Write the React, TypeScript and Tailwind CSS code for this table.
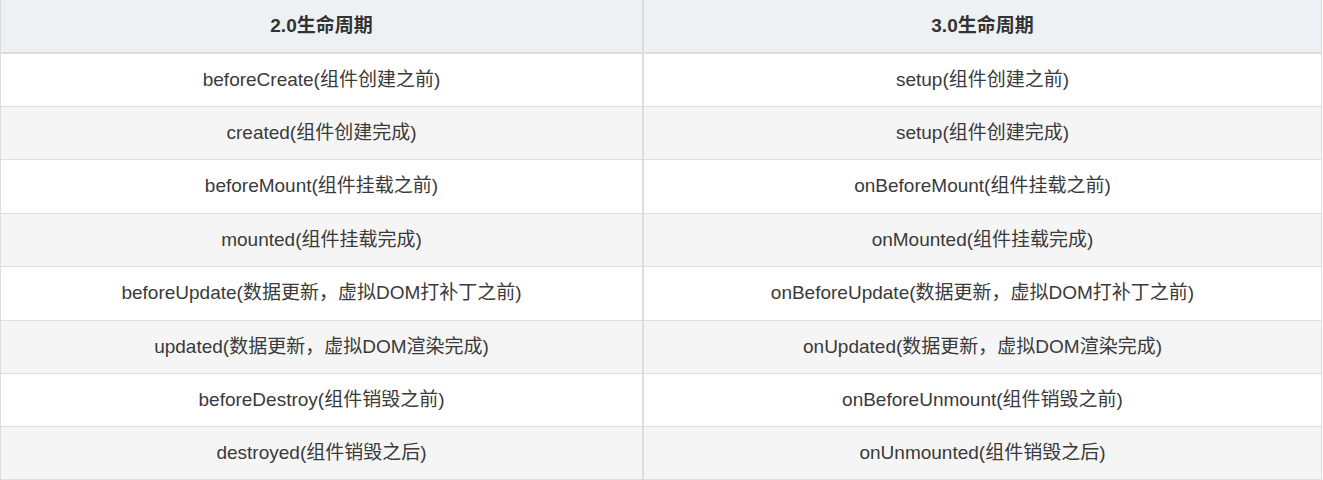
import React from "react";

type Row = {
  v2: string;
  v3: string;
  h: string;
};

// lifecycle rows, heights tuned so the borders land on the reference
const rows: Row[] = [
  { v2: "beforeCreate(组件创建之前)", v3: "setup(组件创建之前)", h: "h-[53px]" },
  { v2: "created(组件创建完成)", v3: "setup(组件创建完成)", h: "h-[53px]" },
  { v2: "beforeMount(组件挂载之前)", v3: "onBeforeMount(组件挂载之前)", h: "h-[54px]" },
  { v2: "mounted(组件挂载完成)", v3: "onMounted(组件挂载完成)", h: "h-[53px]" },
  { v2: "beforeUpdate(数据更新，虚拟DOM打补丁之前)", v3: "onBeforeUpdate(数据更新，虚拟DOM打补丁之前)", h: "h-[54px]" },
  { v2: "updated(数据更新，虚拟DOM渲染完成)", v3: "onUpdated(数据更新，虚拟DOM渲染完成)", h: "h-[53px]" },
  { v2: "beforeDestroy(组件销毁之前)", v3: "onBeforeUnmount(组件销毁之前)", h: "h-[53px]" },
  { v2: "destroyed(组件销毁之后)", v3: "onUnmounted(组件销毁之后)", h: "h-[53px]" },
];

const font = {
  fontFamily: '"Liberation Sans", "Noto Sans CJK SC", sans-serif',
};

export default function App() {
  return (
    <div className="w-[1323px] h-[480px] bg-white overflow-hidden" style={font}>
      <div className="w-[1322px] border-l border-r border-[#dddddd] text-[19px] text-[#3a3a3a]">
        <div className="flex h-[54px] bg-[#eef1f4] border-b-2 border-[#dddddd] font-bold text-[#333333]">
          <div className="w-[643px] flex items-center justify-center border-r-2 border-[#dddddd]">
            2.0生命周期
          </div>
          <div className="flex-1 flex items-center justify-center">3.0生命周期</div>
        </div>
        {rows.map((r, i) => (
          <div
            key={r.v2}
            className={`flex ${r.h} border-b border-[#dddddd] ${i % 2 === 1 ? "bg-[#f5f5f5]" : "bg-white"}`}
          >
            <div className="w-[643px] flex items-center justify-center border-r-2 border-[#dddddd]">
              {r.v2}
            </div>
            <div className="flex-1 flex items-center justify-center">{r.v3}</div>
          </div>
        ))}
      </div>
    </div>
  );
}
